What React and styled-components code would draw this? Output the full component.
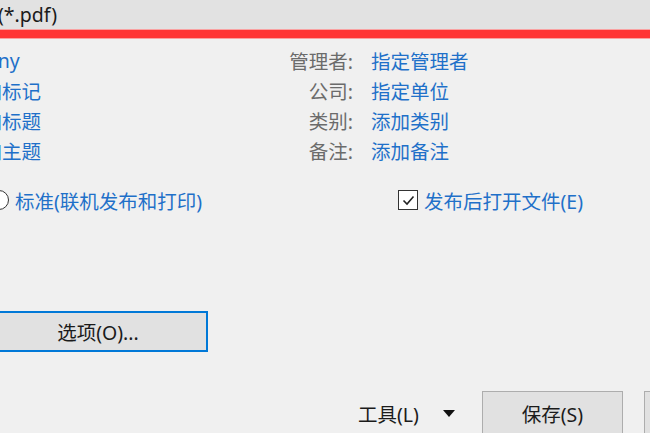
import React from 'react'
import styled, { createGlobalStyle } from 'styled-components'

const FONT = `"Noto Sans", "Noto Sans CJK SC", sans-serif`
const LINK = '#1f70c9'
const INK = '#1b1b1b'

const GlobalStyle = createGlobalStyle`
  html, body {
    margin: 0;
    padding: 0;
    background: #f0f0f0;
    overflow: hidden;
  }
  body {
    font-family: ${FONT};
  }
`

const Frame = styled.div`
  width: 650px;
  height: 433px;
  overflow: hidden;
  background: #f0f0f0;
  font-size: 19.5px;
  color: ${INK};
`

const TopBar = styled.div`
  height: 29px;
  background: #e2e2e2;
  display: flex;
  align-items: center;
  overflow: hidden;
`

const TypeText = styled.span`
  margin-left: -2px;
  color: ${INK};
  white-space: nowrap;
`

// red highlight stroke across the file-type box
const RedRule = styled.div`
  height: 8px;
  margin-top: 1px;
  background: #ff3535;
  box-shadow: 0 0 0 1px rgba(255, 110, 110, 0.6);
`

const Body = styled.div`
  padding-top: 7px;
  display: flex;
  flex-direction: column;
`

const MetaGrid = styled.div`
  margin-left: -37px;
  display: grid;
  grid-template-columns: 307px 83px 1fr;
  grid-auto-rows: 30px;
  align-items: center;
  white-space: nowrap;
`

const Value = styled.span`
  color: ${LINK};
  padding-left: ${(p) => (p.$indent ? '18px' : '0')};
`

const Label = styled.span`
  color: #6b6b6b;
  text-align: right;
`

const OptionRow = styled.div`
  margin-top: 20px;
  margin-left: -11px;
  height: 30px;
  display: grid;
  grid-template-columns: 409px 1fr;
  align-items: center;
  white-space: nowrap;
`

const Choice = styled.label`
  display: flex;
  align-items: center;
  gap: ${(p) => p.$gap || 6}px;
  color: ${LINK};
`

const Radio = styled.span`
  width: 18px;
  height: 18px;
  border: 1px solid #333;
  border-radius: 50%;
  background: #fff;
`

const Check = styled.span`
  width: 18px;
  height: 18px;
  border: 1px solid #333;
  background: #fff;
  display: flex;
  align-items: center;
  justify-content: center;
`

const OptionsButton = styled.div`
  margin-top: 96px;
  margin-left: -12px;
  width: 216px;
  height: 37px;
  border: 2px solid #0078d7;
  background: #e1e1e1;
  display: flex;
  align-items: center;
  justify-content: center;
  color: ${INK};
`

const Footer = styled.div`
  margin-top: 39px;
  padding-left: 358px;
  display: flex;
  align-items: center;
  white-space: nowrap;
`

const Tools = styled.span`
  color: ${INK};
`

const Caret = styled.span`
  margin-left: 24px;
  margin-right: 27px;
  width: 0;
  height: 0;
  border-left: 6px solid transparent;
  border-right: 6px solid transparent;
  border-top: 7px solid #111;
`

const Button = styled.div`
  flex: none;
  width: 139px;
  height: 42px;
  margin-right: ${(p) => p.$gap || 0}px;
  border: 1px solid #adadad;
  background: #e1e1e1;
  display: flex;
  align-items: center;
  justify-content: center;
  color: ${INK};
`

const meta = [
  ['Sunny', '管理者:', '指定管理者'],
  ['添加标记', '公司:', '指定单位'],
  ['添加标题', '类别:', '添加类别'],
  ['添加主题', '备注:', '添加备注'],
]

export default function App() {
  return (
    <>
      <GlobalStyle />
      <Frame>
        <TopBar>
          <TypeText>(*.pdf)</TypeText>
        </TopBar>
        <RedRule />
        <Body>
          <MetaGrid>
            {meta.map(([left, label, value]) => (
              <React.Fragment key={label}>
                <Value>{left}</Value>
                <Label>{label}</Label>
                <Value $indent>{value}</Value>
              </React.Fragment>
            ))}
          </MetaGrid>

          <OptionRow>
            <Choice>
              <Radio />
              标准(联机发布和打印)
            </Choice>
            <Choice $gap={6}>
              <Check>
                <svg width="15" height="15" viewBox="0 0 15 15">
                  <path d="M2.5 7.5 L6 11 L12.5 3.5" fill="none" stroke="#222" strokeWidth="1.6" />
                </svg>
              </Check>
              发布后打开文件(E)
            </Choice>
          </OptionRow>

          <OptionsButton>选项(O)...</OptionsButton>

          <Footer>
            <Tools>工具(L)</Tools>
            <Caret />
            <Button $gap={21}>保存(S)</Button>
            <Button>取消</Button>
          </Footer>
        </Body>
      </Frame>
    </>
  )
}
